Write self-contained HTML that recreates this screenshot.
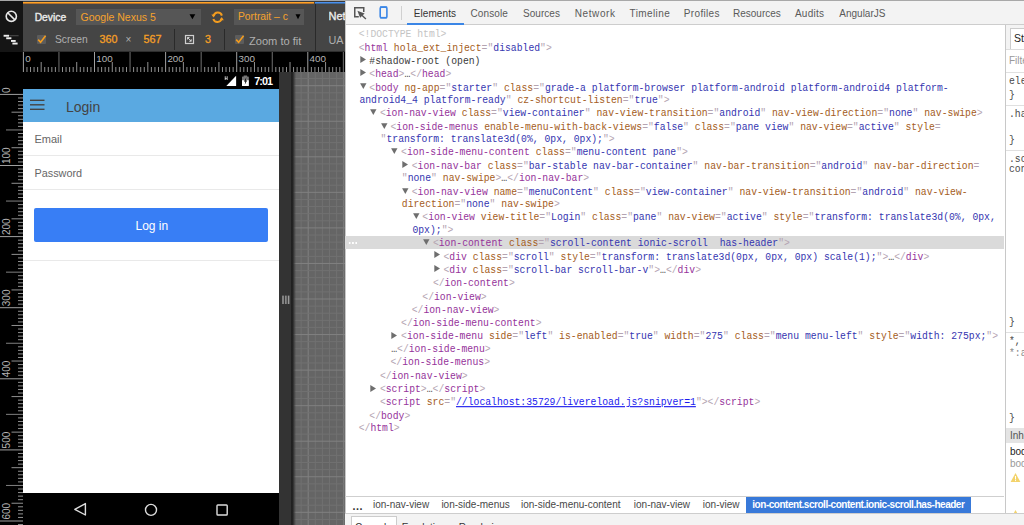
<!DOCTYPE html>
<html><head><meta charset="utf-8"><style>
*{margin:0;padding:0}
body{width:1024px;height:525px;overflow:hidden;position:relative;background:#fff;font-family:"Liberation Sans",sans-serif}
.a{position:absolute}
.row{position:absolute;white-space:pre;transform:scaleY(1.12);transform-origin:0 9.1px;font-family:"Liberation Mono",monospace;font-size:9.75px;line-height:13px;color:#222}
.row i{font-style:normal}
.b{color:#b4a4b2}.t{color:#95329a}.n{color:#a45c22}.v{color:#3535b0}.d{color:#c4c4c4}.p{color:#3a3a3a}.e{color:#444}
.l{color:#1a1aee;text-decoration:underline}
.tri{position:absolute}
.tab{position:absolute;top:7.8px;font-size:10px;line-height:12px;color:#333;white-space:pre}
.tb{position:absolute;white-space:pre;line-height:14px}
.or{color:#f5a22d}
.gr{color:#b0b0b0}
.crumb{position:absolute;top:499.2px;font-size:10px;line-height:12px;color:#484848;white-space:pre}
.sb{position:absolute;white-space:pre;transform:scaleY(1.12);transform-origin:0 9px;font-family:"Liberation Mono",monospace;font-size:9.75px;line-height:12px;color:#4a4a4a}
</style></head><body>
<div class=a style="left:0;top:0;width:345px;height:525px;background:#000"></div>
<div class=a style="left:0;top:0;width:23px;height:52px;background:#151515"></div>
<div class=a style="left:23px;top:0;width:322px;height:52px;background:#454545"></div>
<div class=a style="left:23px;top:51px;width:322px;height:1px;background:#2e2e2e"></div>
<div class=a style="left:0;top:0;width:1024px;height:1px;background:#a8a8a8"></div>
<div class=a style="left:23px;top:1px;width:322px;height:1px;background:#3a3a3a"></div>
<div class=a style="left:23px;top:2px;width:291px;height:1px;background:#ffa326"></div>
<div class=a style="left:23px;top:3px;width:291px;height:1px;background:#b8742c"></div>
<div class=a style="left:315px;top:2px;width:30px;height:1px;background:#4a90f0"></div>
<div class=a style="left:315px;top:3px;width:30px;height:1px;background:#3f6c9e"></div>
<div class=a style="left:314.5px;top:4px;width:1px;height:48px;background:#2a2a2a"></div>
<div class=a style="left:173.8px;top:29px;width:1px;height:21px;background:#2a2a2a"></div>
<div class=a style="left:224.0px;top:29px;width:1px;height:21px;background:#2a2a2a"></div>
<svg class=a style="left:0;top:0" width="23" height="52"><circle cx="11.3" cy="16.3" r="5.1" fill="none" stroke="#e8e8e8" stroke-width="1.6"/><line x1="7.7" y1="12.7" x2="14.9" y2="19.9" stroke="#e8e8e8" stroke-width="1.6"/><rect x="3.6" y="34.8" width="5.4" height="1.9" fill="#eee"/><rect x="9" y="35.3" width="9.6" height="0.9" fill="#555"/><rect x="6.2" y="37.3" width="5.2" height="1.9" fill="#eee"/><rect x="11" y="40" width="4.7" height="1.9" fill="#eee"/><rect x="12.4" y="42.6" width="5.2" height="1.9" fill="#eee"/></svg>
<div class="tb" style="left:34.7px;top:11.1px;font-size:10.3px;color:#ececec;-webkit-text-stroke:0.35px #ececec">Device</div>
<div class=a style="left:76px;top:9px;width:125px;height:16px;background:#565656"></div>
<div class="tb or" style="left:80.5px;top:10px;font-size:10.5px">Google Nexus 5</div>
<svg class=a style="left:189px;top:14px" width="7" height="6"><path d="M0.5 0.2H6.3L3.4 5.2Z" fill="#000"/></svg>
<svg class=a style="left:209px;top:9.4px" width="18" height="16"><path d="M4.6 7A4.3 4.3 0 0 1 12.9 6.6" fill="none" stroke="#f39c1f" stroke-width="2"/><path d="M12.6 9.6A4.3 4.3 0 0 1 4.3 10" fill="none" stroke="#f39c1f" stroke-width="2"/><path d="M2.4 5.4L6.6 5.4L4.5 8.6Z" fill="#f39c1f"/><path d="M14.8 11.2L10.6 11.2L12.7 8Z" fill="#f39c1f"/></svg>
<div class=a style="left:234px;top:9px;width:70px;height:16px;background:#565656"></div>
<div class="tb or" style="left:238px;top:10px;font-size:10.3px">Portrait – c</div>
<svg class=a style="left:295px;top:14px" width="7" height="6"><path d="M0.5 0.2H5.5L3 5.2Z" fill="#000"/></svg>
<div class="tb" style="left:328.5px;top:9px;font-size:11px;color:#ececec;-webkit-text-stroke:0.35px #ececec;width:16.3px;overflow:hidden">Net</div>
<div class=a style="left:37px;top:35.2px;width:9px;height:9px;background:#5c5c5c;border-radius:1px"></div><svg class=a style="left:36px;top:34.2px" width="12" height="11"><path d="M2.2 5.6L4.6 8.2L9.6 1.8" fill="none" stroke="#f39c1f" stroke-width="1.6"/></svg>
<div class="tb gr" style="left:55px;top:32.6px;font-size:10.3px">Screen</div>
<div class="tb or" style="left:99.5px;top:32.4px;font-size:10.8px;-webkit-text-stroke:0.3px #f39c1f">360</div>
<div class="tb gr" style="left:125.5px;top:33px;font-size:10px">×</div>
<div class="tb or" style="left:143.5px;top:32.4px;font-size:10.8px;-webkit-text-stroke:0.3px #f39c1f">567</div>
<svg class=a style="left:184px;top:34px" width="11" height="11"><rect x="1.5" y="1.5" width="8" height="8" fill="none" stroke="#cfcfcf" stroke-width="1.2"/><path d="M3.5 3.5L7.2 7.2M3.5 3.5V5.5M3.5 3.5H5.5M7.2 7.2V5.2M7.2 7.2H5.2" stroke="#cfcfcf" stroke-width="1"/></svg>
<div class="tb or" style="left:205px;top:32.4px;font-size:10.8px;-webkit-text-stroke:0.3px #f39c1f">3</div>
<div class=a style="left:235px;top:35.2px;width:9px;height:9px;background:#5c5c5c;border-radius:1px"></div><svg class=a style="left:234px;top:34.2px" width="12" height="11"><path d="M2.2 5.6L4.6 8.2L9.6 1.8" fill="none" stroke="#f39c1f" stroke-width="1.6"/></svg>
<div class="tb gr" style="left:249px;top:33.7px;font-size:11.1px">Zoom to fit</div>
<div class="tb gr" style="left:328.5px;top:32.5px;font-size:10.8px">UA</div>
<svg class=a style="left:0;top:0" width="345" height="525"><rect x="22.90" y="52" width="1" height="20" fill="#a0a0a0"/><text x="25.20" y="62.1" fill="#b4b4b4" font-size="9.8" font-family="Liberation Sans">0</text><rect x="26.45" y="67" width="1" height="5" fill="#909090"/><rect x="30.01" y="67" width="1" height="5" fill="#909090"/><rect x="33.56" y="67" width="1" height="5" fill="#909090"/><rect x="37.12" y="67" width="1" height="5" fill="#909090"/><rect x="40.67" y="62" width="1" height="10" fill="#909090"/><rect x="44.23" y="67" width="1" height="5" fill="#909090"/><rect x="47.78" y="67" width="1" height="5" fill="#909090"/><rect x="51.34" y="67" width="1" height="5" fill="#909090"/><rect x="54.89" y="67" width="1" height="5" fill="#909090"/><rect x="58.45" y="52" width="1" height="20" fill="#707070"/><rect x="62.00" y="67" width="1" height="5" fill="#909090"/><rect x="65.56" y="67" width="1" height="5" fill="#909090"/><rect x="69.11" y="67" width="1" height="5" fill="#909090"/><rect x="72.67" y="67" width="1" height="5" fill="#909090"/><rect x="76.22" y="62" width="1" height="10" fill="#909090"/><rect x="79.78" y="67" width="1" height="5" fill="#909090"/><rect x="83.33" y="67" width="1" height="5" fill="#909090"/><rect x="86.89" y="67" width="1" height="5" fill="#909090"/><rect x="90.44" y="67" width="1" height="5" fill="#909090"/><rect x="94.00" y="52" width="1" height="20" fill="#a0a0a0"/><text x="96.30" y="62.1" fill="#b4b4b4" font-size="9.8" font-family="Liberation Sans">100</text><rect x="97.56" y="67" width="1" height="5" fill="#909090"/><rect x="101.11" y="67" width="1" height="5" fill="#909090"/><rect x="104.66" y="67" width="1" height="5" fill="#909090"/><rect x="108.22" y="67" width="1" height="5" fill="#909090"/><rect x="111.78" y="62" width="1" height="10" fill="#909090"/><rect x="115.33" y="67" width="1" height="5" fill="#909090"/><rect x="118.88" y="67" width="1" height="5" fill="#909090"/><rect x="122.44" y="67" width="1" height="5" fill="#909090"/><rect x="126.00" y="67" width="1" height="5" fill="#909090"/><rect x="129.55" y="52" width="1" height="20" fill="#707070"/><rect x="133.10" y="67" width="1" height="5" fill="#909090"/><rect x="136.66" y="67" width="1" height="5" fill="#909090"/><rect x="140.22" y="67" width="1" height="5" fill="#909090"/><rect x="143.77" y="67" width="1" height="5" fill="#909090"/><rect x="147.32" y="62" width="1" height="10" fill="#909090"/><rect x="150.88" y="67" width="1" height="5" fill="#909090"/><rect x="154.44" y="67" width="1" height="5" fill="#909090"/><rect x="157.99" y="67" width="1" height="5" fill="#909090"/><rect x="161.54" y="67" width="1" height="5" fill="#909090"/><rect x="165.10" y="52" width="1" height="20" fill="#a0a0a0"/><text x="167.40" y="62.1" fill="#b4b4b4" font-size="9.8" font-family="Liberation Sans">200</text><rect x="168.66" y="67" width="1" height="5" fill="#909090"/><rect x="172.21" y="67" width="1" height="5" fill="#909090"/><rect x="175.76" y="67" width="1" height="5" fill="#909090"/><rect x="179.32" y="67" width="1" height="5" fill="#909090"/><rect x="182.88" y="62" width="1" height="10" fill="#909090"/><rect x="186.43" y="67" width="1" height="5" fill="#909090"/><rect x="189.98" y="67" width="1" height="5" fill="#909090"/><rect x="193.54" y="67" width="1" height="5" fill="#909090"/><rect x="197.09" y="67" width="1" height="5" fill="#909090"/><rect x="200.65" y="52" width="1" height="20" fill="#707070"/><rect x="204.20" y="67" width="1" height="5" fill="#909090"/><rect x="207.76" y="67" width="1" height="5" fill="#909090"/><rect x="211.31" y="67" width="1" height="5" fill="#909090"/><rect x="214.87" y="67" width="1" height="5" fill="#909090"/><rect x="218.42" y="62" width="1" height="10" fill="#909090"/><rect x="221.98" y="67" width="1" height="5" fill="#909090"/><rect x="225.53" y="67" width="1" height="5" fill="#909090"/><rect x="229.09" y="67" width="1" height="5" fill="#909090"/><rect x="232.64" y="67" width="1" height="5" fill="#909090"/><rect x="236.20" y="52" width="1" height="20" fill="#a0a0a0"/><text x="238.50" y="62.1" fill="#b4b4b4" font-size="9.8" font-family="Liberation Sans">300</text><rect x="239.75" y="67" width="1" height="5" fill="#909090"/><rect x="243.31" y="67" width="1" height="5" fill="#909090"/><rect x="246.86" y="67" width="1" height="5" fill="#909090"/><rect x="250.42" y="67" width="1" height="5" fill="#909090"/><rect x="253.97" y="62" width="1" height="10" fill="#909090"/><rect x="257.53" y="67" width="1" height="5" fill="#909090"/><rect x="261.08" y="67" width="1" height="5" fill="#909090"/><rect x="264.64" y="67" width="1" height="5" fill="#909090"/><rect x="268.19" y="67" width="1" height="5" fill="#909090"/><rect x="271.75" y="52" width="1" height="20" fill="#707070"/><rect x="275.31" y="67" width="1" height="5" fill="#909090"/><rect x="278.86" y="67" width="1" height="5" fill="#909090"/><rect x="282.41" y="67" width="1" height="5" fill="#909090"/><rect x="285.97" y="67" width="1" height="5" fill="#909090"/><rect x="289.52" y="62" width="1" height="10" fill="#909090"/><rect x="293.08" y="67" width="1" height="5" fill="#909090"/><rect x="296.63" y="67" width="1" height="5" fill="#909090"/><rect x="300.19" y="67" width="1" height="5" fill="#909090"/><rect x="303.74" y="67" width="1" height="5" fill="#909090"/><rect x="307.30" y="52" width="1" height="20" fill="#a0a0a0"/><text x="309.60" y="62.1" fill="#b4b4b4" font-size="9.8" font-family="Liberation Sans">400</text><rect x="310.85" y="67" width="1" height="5" fill="#909090"/><rect x="314.41" y="67" width="1" height="5" fill="#909090"/><rect x="317.96" y="67" width="1" height="5" fill="#909090"/><rect x="321.52" y="67" width="1" height="5" fill="#909090"/><rect x="325.07" y="62" width="1" height="10" fill="#909090"/><rect x="328.63" y="67" width="1" height="5" fill="#909090"/><rect x="332.18" y="67" width="1" height="5" fill="#909090"/><rect x="335.74" y="67" width="1" height="5" fill="#909090"/><rect x="339.29" y="67" width="1" height="5" fill="#909090"/><rect x="342.85" y="52" width="1" height="20" fill="#707070"/><rect x="0" y="93.90" width="23" height="1" fill="#a0a0a0"/><text transform="translate(9.6 92.90) rotate(-90)" fill="#b4b4b4" font-size="10" font-family="Liberation Sans">0</text><rect x="18" y="97.46" width="5" height="1" fill="#909090"/><rect x="18" y="101.01" width="5" height="1" fill="#909090"/><rect x="18" y="104.56" width="5" height="1" fill="#909090"/><rect x="18" y="108.12" width="5" height="1" fill="#909090"/><rect x="11.5" y="111.68" width="11.5" height="1" fill="#909090"/><rect x="18" y="115.23" width="5" height="1" fill="#909090"/><rect x="18" y="118.78" width="5" height="1" fill="#909090"/><rect x="18" y="122.34" width="5" height="1" fill="#909090"/><rect x="18" y="125.90" width="5" height="1" fill="#909090"/><rect x="6" y="129.45" width="17" height="1" fill="#808080"/><rect x="18" y="133.00" width="5" height="1" fill="#909090"/><rect x="18" y="136.56" width="5" height="1" fill="#909090"/><rect x="18" y="140.12" width="5" height="1" fill="#909090"/><rect x="18" y="143.67" width="5" height="1" fill="#909090"/><rect x="11.5" y="147.22" width="11.5" height="1" fill="#909090"/><rect x="18" y="150.78" width="5" height="1" fill="#909090"/><rect x="18" y="154.34" width="5" height="1" fill="#909090"/><rect x="18" y="157.89" width="5" height="1" fill="#909090"/><rect x="18" y="161.44" width="5" height="1" fill="#909090"/><rect x="0" y="165.00" width="23" height="1" fill="#a0a0a0"/><text transform="translate(9.6 164.00) rotate(-90)" fill="#b4b4b4" font-size="10" font-family="Liberation Sans">100</text><rect x="18" y="168.56" width="5" height="1" fill="#909090"/><rect x="18" y="172.11" width="5" height="1" fill="#909090"/><rect x="18" y="175.67" width="5" height="1" fill="#909090"/><rect x="18" y="179.22" width="5" height="1" fill="#909090"/><rect x="11.5" y="182.78" width="11.5" height="1" fill="#909090"/><rect x="18" y="186.33" width="5" height="1" fill="#909090"/><rect x="18" y="189.88" width="5" height="1" fill="#909090"/><rect x="18" y="193.44" width="5" height="1" fill="#909090"/><rect x="18" y="197.00" width="5" height="1" fill="#909090"/><rect x="6" y="200.55" width="17" height="1" fill="#808080"/><rect x="18" y="204.11" width="5" height="1" fill="#909090"/><rect x="18" y="207.66" width="5" height="1" fill="#909090"/><rect x="18" y="211.22" width="5" height="1" fill="#909090"/><rect x="18" y="214.77" width="5" height="1" fill="#909090"/><rect x="11.5" y="218.32" width="11.5" height="1" fill="#909090"/><rect x="18" y="221.88" width="5" height="1" fill="#909090"/><rect x="18" y="225.44" width="5" height="1" fill="#909090"/><rect x="18" y="228.99" width="5" height="1" fill="#909090"/><rect x="18" y="232.54" width="5" height="1" fill="#909090"/><rect x="0" y="236.10" width="23" height="1" fill="#a0a0a0"/><text transform="translate(9.6 235.10) rotate(-90)" fill="#b4b4b4" font-size="10" font-family="Liberation Sans">200</text><rect x="18" y="239.66" width="5" height="1" fill="#909090"/><rect x="18" y="243.21" width="5" height="1" fill="#909090"/><rect x="18" y="246.76" width="5" height="1" fill="#909090"/><rect x="18" y="250.32" width="5" height="1" fill="#909090"/><rect x="11.5" y="253.88" width="11.5" height="1" fill="#909090"/><rect x="18" y="257.43" width="5" height="1" fill="#909090"/><rect x="18" y="260.99" width="5" height="1" fill="#909090"/><rect x="18" y="264.54" width="5" height="1" fill="#909090"/><rect x="18" y="268.10" width="5" height="1" fill="#909090"/><rect x="6" y="271.65" width="17" height="1" fill="#808080"/><rect x="18" y="275.20" width="5" height="1" fill="#909090"/><rect x="18" y="278.76" width="5" height="1" fill="#909090"/><rect x="18" y="282.31" width="5" height="1" fill="#909090"/><rect x="18" y="285.87" width="5" height="1" fill="#909090"/><rect x="11.5" y="289.42" width="11.5" height="1" fill="#909090"/><rect x="18" y="292.98" width="5" height="1" fill="#909090"/><rect x="18" y="296.53" width="5" height="1" fill="#909090"/><rect x="18" y="300.09" width="5" height="1" fill="#909090"/><rect x="18" y="303.64" width="5" height="1" fill="#909090"/><rect x="0" y="307.20" width="23" height="1" fill="#a0a0a0"/><text transform="translate(9.6 306.20) rotate(-90)" fill="#b4b4b4" font-size="10" font-family="Liberation Sans">300</text><rect x="18" y="310.75" width="5" height="1" fill="#909090"/><rect x="18" y="314.31" width="5" height="1" fill="#909090"/><rect x="18" y="317.87" width="5" height="1" fill="#909090"/><rect x="18" y="321.42" width="5" height="1" fill="#909090"/><rect x="11.5" y="324.98" width="11.5" height="1" fill="#909090"/><rect x="18" y="328.53" width="5" height="1" fill="#909090"/><rect x="18" y="332.09" width="5" height="1" fill="#909090"/><rect x="18" y="335.64" width="5" height="1" fill="#909090"/><rect x="18" y="339.19" width="5" height="1" fill="#909090"/><rect x="6" y="342.75" width="17" height="1" fill="#808080"/><rect x="18" y="346.31" width="5" height="1" fill="#909090"/><rect x="18" y="349.86" width="5" height="1" fill="#909090"/><rect x="18" y="353.41" width="5" height="1" fill="#909090"/><rect x="18" y="356.97" width="5" height="1" fill="#909090"/><rect x="11.5" y="360.52" width="11.5" height="1" fill="#909090"/><rect x="18" y="364.08" width="5" height="1" fill="#909090"/><rect x="18" y="367.63" width="5" height="1" fill="#909090"/><rect x="18" y="371.19" width="5" height="1" fill="#909090"/><rect x="18" y="374.75" width="5" height="1" fill="#909090"/><rect x="0" y="378.30" width="23" height="1" fill="#a0a0a0"/><text transform="translate(9.6 377.30) rotate(-90)" fill="#b4b4b4" font-size="10" font-family="Liberation Sans">400</text><rect x="18" y="381.86" width="5" height="1" fill="#909090"/><rect x="18" y="385.41" width="5" height="1" fill="#909090"/><rect x="18" y="388.97" width="5" height="1" fill="#909090"/><rect x="18" y="392.52" width="5" height="1" fill="#909090"/><rect x="11.5" y="396.08" width="11.5" height="1" fill="#909090"/><rect x="18" y="399.63" width="5" height="1" fill="#909090"/><rect x="18" y="403.18" width="5" height="1" fill="#909090"/><rect x="18" y="406.74" width="5" height="1" fill="#909090"/><rect x="18" y="410.29" width="5" height="1" fill="#909090"/><rect x="6" y="413.85" width="17" height="1" fill="#808080"/><rect x="18" y="417.40" width="5" height="1" fill="#909090"/><rect x="18" y="420.96" width="5" height="1" fill="#909090"/><rect x="18" y="424.51" width="5" height="1" fill="#909090"/><rect x="18" y="428.07" width="5" height="1" fill="#909090"/><rect x="11.5" y="431.62" width="11.5" height="1" fill="#909090"/><rect x="18" y="435.18" width="5" height="1" fill="#909090"/><rect x="18" y="438.74" width="5" height="1" fill="#909090"/><rect x="18" y="442.29" width="5" height="1" fill="#909090"/><rect x="18" y="445.85" width="5" height="1" fill="#909090"/><rect x="0" y="449.40" width="23" height="1" fill="#a0a0a0"/><text transform="translate(9.6 448.40) rotate(-90)" fill="#b4b4b4" font-size="10" font-family="Liberation Sans">500</text><rect x="18" y="452.96" width="5" height="1" fill="#909090"/><rect x="18" y="456.51" width="5" height="1" fill="#909090"/><rect x="18" y="460.06" width="5" height="1" fill="#909090"/><rect x="18" y="463.62" width="5" height="1" fill="#909090"/><rect x="11.5" y="467.17" width="11.5" height="1" fill="#909090"/><rect x="18" y="470.73" width="5" height="1" fill="#909090"/><rect x="18" y="474.28" width="5" height="1" fill="#909090"/><rect x="18" y="477.84" width="5" height="1" fill="#909090"/><rect x="18" y="481.39" width="5" height="1" fill="#909090"/><rect x="6" y="484.95" width="17" height="1" fill="#808080"/><rect x="18" y="488.50" width="5" height="1" fill="#909090"/><rect x="18" y="492.06" width="5" height="1" fill="#909090"/><rect x="18" y="495.62" width="5" height="1" fill="#909090"/><rect x="18" y="499.17" width="5" height="1" fill="#909090"/><rect x="11.5" y="502.73" width="11.5" height="1" fill="#909090"/><rect x="18" y="506.28" width="5" height="1" fill="#909090"/><rect x="18" y="509.84" width="5" height="1" fill="#909090"/><rect x="18" y="513.39" width="5" height="1" fill="#909090"/><rect x="18" y="516.94" width="5" height="1" fill="#909090"/><rect x="0" y="520.50" width="23" height="1" fill="#a0a0a0"/><text transform="translate(9.6 519.50) rotate(-90)" fill="#b4b4b4" font-size="10" font-family="Liberation Sans">600</text><rect x="18" y="524.05" width="5" height="1" fill="#909090"/></svg>
<div class=a style="left:23px;top:72px;width:256px;height:17.3px;background:#000"></div>
<svg class=a style="left:215px;top:72px" width="64" height="17"><path d="M9.4 4.2H10.4V6.3H12V4.2H13V9H12V7.1H10.4V9H9.4Z" fill="#fff" transform="translate(0.5 0) scale(0.75) translate(3 1.6)"/><path d="M11.3 13.9L21.1 3.8V13.9Z" fill="#fff"/><path d="M28.7 3.5H32.1V4.5H33.2Q33.8 4.5 33.8 5.1V13.4Q33.8 14 33.2 14H27.6Q27 14 27 13.4V5.1Q27 4.5 27.6 4.5H28.7Z" fill="#777"/><path d="M27 8.3H33.8V13.4Q33.8 14 33.2 14H27.6Q27 14 27 13.4Z" fill="#fff"/><path d="M31.3 5.6L28.9 9.6H30.4L29.7 12.8L32.1 8.6H30.6L31.4 5.6Z" fill="#000"/></svg>
<div class="tb" style="left:254.2px;top:75.2px;font-size:10.8px;font-weight:bold;color:#fff;line-height:12px;letter-spacing:-0.9px">7:01</div>
<div class=a style="left:23px;top:89.3px;width:256px;height:32.3px;background:#5aa9e1"></div>
<svg class=a style="left:29px;top:98px" width="17" height="13"><rect x="1" y="1.6" width="14.5" height="1.4" fill="#444"/><rect x="1" y="6.1" width="14.5" height="1.4" fill="#444"/><rect x="1" y="10.6" width="14.5" height="1.4" fill="#444"/></svg>
<div class="tb" style="left:66px;top:98.5px;font-size:14px;color:#444;line-height:16px">Login</div>
<div class=a style="left:23px;top:121.6px;width:256px;height:371.4px;background:#fff"></div>
<div class="tb" style="left:34.5px;top:133px;font-size:11px;color:#666;line-height:13px">Email</div>
<div class=a style="left:23px;top:155px;width:256px;height:1px;background:#e9e9e9"></div>
<div class="tb" style="left:34.5px;top:167px;font-size:10.85px;color:#666;line-height:13px">Password</div>
<div class=a style="left:23px;top:189px;width:256px;height:1px;background:#e9e9e9"></div>
<div class=a style="left:34.2px;top:208px;width:233.5px;height:33.5px;background:#387ef5;border-radius:2px"></div>
<div class="tb" style="left:135.5px;top:218.5px;font-size:12px;color:#fff;line-height:14px">Log in</div>
<div class=a style="left:23px;top:260px;width:256px;height:1px;background:#e9e9e9"></div>
<div class=a style="left:23px;top:493px;width:256px;height:32px;background:#000"></div>
<svg class=a style="left:23px;top:493px" width="256" height="32"><path d="M51.8 16.3L62.4 10.6V22Z" fill="none" stroke="#ddd" stroke-width="1.4" stroke-linejoin="round"/><circle cx="128" cy="16.9" r="5.5" fill="none" stroke="#ddd" stroke-width="1.4"/><rect x="194" y="12" width="10.2" height="10" rx="0.8" fill="none" stroke="#ddd" stroke-width="1.4"/></svg>
<div class=a style="left:279px;top:72px;width:14px;height:453px;background:#333"></div>
<div class=a style="left:293px;top:72px;width:52px;height:453px;background:#656565"></div>
<svg class=a style="left:0;top:0" width="345" height="525"><rect x="293.48" y="72" width="1" height="453" fill="#717171"/><rect x="300.59" y="72" width="1" height="453" fill="#717171"/><rect x="307.70" y="72" width="1" height="453" fill="#808080"/><rect x="314.81" y="72" width="1" height="453" fill="#717171"/><rect x="321.92" y="72" width="1" height="453" fill="#717171"/><rect x="329.03" y="72" width="1" height="453" fill="#717171"/><rect x="336.14" y="72" width="1" height="453" fill="#717171"/><rect x="343.25" y="72" width="1" height="453" fill="#808080"/><rect x="292" y="78.09" width="54" height="1" fill="#717171"/><rect x="292" y="85.20" width="54" height="1" fill="#808080"/><rect x="292" y="92.31" width="54" height="1" fill="#717171"/><rect x="292" y="99.42" width="54" height="1" fill="#717171"/><rect x="292" y="106.53" width="54" height="1" fill="#717171"/><rect x="292" y="113.64" width="54" height="1" fill="#717171"/><rect x="292" y="120.75" width="54" height="1" fill="#808080"/><rect x="292" y="127.86" width="54" height="1" fill="#717171"/><rect x="292" y="134.97" width="54" height="1" fill="#717171"/><rect x="292" y="142.08" width="54" height="1" fill="#717171"/><rect x="292" y="149.19" width="54" height="1" fill="#717171"/><rect x="292" y="156.30" width="54" height="1" fill="#808080"/><rect x="292" y="163.41" width="54" height="1" fill="#717171"/><rect x="292" y="170.52" width="54" height="1" fill="#717171"/><rect x="292" y="177.63" width="54" height="1" fill="#717171"/><rect x="292" y="184.74" width="54" height="1" fill="#717171"/><rect x="292" y="191.85" width="54" height="1" fill="#808080"/><rect x="292" y="198.96" width="54" height="1" fill="#717171"/><rect x="292" y="206.07" width="54" height="1" fill="#717171"/><rect x="292" y="213.18" width="54" height="1" fill="#717171"/><rect x="292" y="220.29" width="54" height="1" fill="#717171"/><rect x="292" y="227.40" width="54" height="1" fill="#808080"/><rect x="292" y="234.51" width="54" height="1" fill="#717171"/><rect x="292" y="241.62" width="54" height="1" fill="#717171"/><rect x="292" y="248.73" width="54" height="1" fill="#717171"/><rect x="292" y="255.84" width="54" height="1" fill="#717171"/><rect x="292" y="262.95" width="54" height="1" fill="#808080"/><rect x="292" y="270.06" width="54" height="1" fill="#717171"/><rect x="292" y="277.17" width="54" height="1" fill="#717171"/><rect x="292" y="284.28" width="54" height="1" fill="#717171"/><rect x="292" y="291.39" width="54" height="1" fill="#717171"/><rect x="292" y="298.50" width="54" height="1" fill="#808080"/><rect x="292" y="305.61" width="54" height="1" fill="#717171"/><rect x="292" y="312.72" width="54" height="1" fill="#717171"/><rect x="292" y="319.83" width="54" height="1" fill="#717171"/><rect x="292" y="326.94" width="54" height="1" fill="#717171"/><rect x="292" y="334.05" width="54" height="1" fill="#808080"/><rect x="292" y="341.16" width="54" height="1" fill="#717171"/><rect x="292" y="348.27" width="54" height="1" fill="#717171"/><rect x="292" y="355.38" width="54" height="1" fill="#717171"/><rect x="292" y="362.49" width="54" height="1" fill="#717171"/><rect x="292" y="369.60" width="54" height="1" fill="#808080"/><rect x="292" y="376.71" width="54" height="1" fill="#717171"/><rect x="292" y="383.82" width="54" height="1" fill="#717171"/><rect x="292" y="390.93" width="54" height="1" fill="#717171"/><rect x="292" y="398.04" width="54" height="1" fill="#717171"/><rect x="292" y="405.15" width="54" height="1" fill="#808080"/><rect x="292" y="412.26" width="54" height="1" fill="#717171"/><rect x="292" y="419.37" width="54" height="1" fill="#717171"/><rect x="292" y="426.48" width="54" height="1" fill="#717171"/><rect x="292" y="433.59" width="54" height="1" fill="#717171"/><rect x="292" y="440.70" width="54" height="1" fill="#808080"/><rect x="292" y="447.81" width="54" height="1" fill="#717171"/><rect x="292" y="454.92" width="54" height="1" fill="#717171"/><rect x="292" y="462.03" width="54" height="1" fill="#717171"/><rect x="292" y="469.14" width="54" height="1" fill="#717171"/><rect x="292" y="476.25" width="54" height="1" fill="#808080"/><rect x="292" y="483.36" width="54" height="1" fill="#717171"/><rect x="292" y="490.47" width="54" height="1" fill="#717171"/><rect x="292" y="497.58" width="54" height="1" fill="#717171"/><rect x="292" y="504.69" width="54" height="1" fill="#717171"/><rect x="292" y="511.80" width="54" height="1" fill="#808080"/><rect x="292" y="518.91" width="54" height="1" fill="#717171"/></svg>
<div class=a style="left:291px;top:72px;width:5px;height:453px;background:linear-gradient(90deg,#1f1f1f 0,#232323 35%,rgba(40,40,40,0) 100%)"></div>
<svg class=a style="left:281px;top:295px" width="10" height="10"><rect x="1.1" y="0.6" width="1.8" height="8.4" fill="#8a8a8a"/><rect x="3.9" y="0.6" width="1.8" height="8.4" fill="#8a8a8a"/><rect x="6.8" y="0.6" width="1.6" height="8.4" fill="#9a9a9a"/></svg>
<div class=a style="left:345px;top:1px;width:679px;height:23.5px;background:#f3f3f3"></div>
<div class=a style="left:345px;top:24px;width:679px;height:1px;background:#cdcdcd"></div>
<div class=a style="left:345px;top:1px;width:1px;height:524px;background:#c8c8c8"></div>
<svg class=a style="left:352px;top:5px" width="16" height="16"><path d="M6.8 11.85H2.75V2.85H11.75V7" fill="none" stroke="#555" stroke-width="1.5"/><path d="M5.4 5.8L12.6 8.6L8.1 12.8Z" fill="#555"/><path d="M9.6 10L13.9 13.9" stroke="#555" stroke-width="1.4"/></svg>
<svg class=a style="left:378px;top:5px" width="11" height="15"><rect x="2.2" y="2.1" width="6.7" height="10.6" rx="1.3" fill="none" stroke="#3b86e6" stroke-width="1.6"/><rect x="2" y="1.4" width="7.1" height="1.6" fill="#3b86e6"/><rect x="2" y="11.9" width="7.1" height="1.6" fill="#3b86e6"/></svg>
<div class=a style="left:401px;top:5.5px;width:1px;height:14px;background:#d0d0d0"></div>
<div class=tab style="left:413.7px;color:#333;letter-spacing:0.1px">Elements</div>
<div class=tab style="left:470.4px;color:#5a5a5a;letter-spacing:0.13px">Console</div>
<div class=tab style="left:523.0px;color:#5a5a5a;letter-spacing:0.05px">Sources</div>
<div class=tab style="left:574.8px;color:#5a5a5a;letter-spacing:0.58px">Network</div>
<div class=tab style="left:629.6px;color:#5a5a5a;letter-spacing:0.39px">Timeline</div>
<div class=tab style="left:683.8px;color:#5a5a5a;letter-spacing:0.34px">Profiles</div>
<div class=tab style="left:733.0px;color:#5a5a5a;letter-spacing:0px">Resources</div>
<div class=tab style="left:794.9px;color:#5a5a5a;letter-spacing:0.28px">Audits</div>
<div class=tab style="left:839.3px;color:#5a5a5a;letter-spacing:0px">AngularJS</div>
<div class=a style="left:407px;top:23px;width:57px;height:2px;background:#3b86e6"></div>
<div style="position:absolute;left:345px;top:236px;width:659px;height:12.5px;background:#dadada"></div><div style="position:absolute;left:348px;top:242px;width:10px;height:2px;background-image:radial-gradient(circle,#fff 0.9px,transparent 1.1px);background-size:3.3px 2px"></div>
<div class=row style="left:358.70px;top:28.11px"><i class=d>&lt;!DOCTYPE html&gt;</i></div>
<div class=row style="left:358.70px;top:41.51px"><i class=b>&lt;</i><i class=t>html</i> <i class=n>hola_ext_inject</i><i class=b>="</i><i class=v>disabled</i><i class=b>"</i><i class=b>&gt;</i></div>
<svg class=tri style="left:359.50px;top:56.15px" width="7" height="7"><path d="M0.3 0.1L6 3.5L0.3 6.9Z" fill="#6e6e6e"/></svg>
<div class=row style="left:369.30px;top:54.56px"><i class=p>#shadow-root (open)</i></div>
<svg class=tri style="left:359.50px;top:69.00px" width="7" height="7"><path d="M0.3 0.1L6 3.5L0.3 6.9Z" fill="#6e6e6e"/></svg>
<div class=row style="left:369.30px;top:67.91px"><i class=b>&lt;</i><i class=t>head</i><i class=b>&gt;</i><i class=e>…</i><i class=b>&lt;/</i><i class=t>head</i><i class=b>&gt;</i></div>
<svg class=tri style="left:359.50px;top:83.35px" width="7" height="6"><path d="M0.1 0.2L6.5 0.2L3.3 5.9Z" fill="#6e6e6e"/></svg>
<div class=row style="left:369.30px;top:81.76px"><i class=b>&lt;</i><i class=t>body</i> <i class=n>ng-app</i><i class=b>="</i><i class=v>starter</i><i class=b>"</i> <i class=n>class</i><i class=b>="</i><i class=v>grade-a platform-browser platform-android platform-android4 platform-</i></div>
<div class=row style="left:359.40px;top:94.06px"><i class=v>android4_4 platform-ready</i><i class=b>"</i> <i class=n>cz-shortcut-listen</i><i class=b>="</i><i class=v>true</i><i class=b>"</i><i class=b>&gt;</i></div>
<svg class=tri style="left:370.10px;top:109.15px" width="7" height="6"><path d="M0.1 0.2L6.5 0.2L3.3 5.9Z" fill="#6e6e6e"/></svg>
<div class=row style="left:379.90px;top:107.16px"><i class=b>&lt;</i><i class=t>ion-nav-view</i> <i class=n>class</i><i class=b>="</i><i class=v>view-container</i><i class=b>"</i> <i class=n>nav-view-transition</i><i class=b>="</i><i class=v>android</i><i class=b>"</i> <i class=n>nav-view-direction</i><i class=b>="</i><i class=v>none</i><i class=b>"</i> <i class=n>nav-swipe</i><i class=b>&gt;</i></div>
<svg class=tri style="left:380.70px;top:122.50px" width="7" height="6"><path d="M0.1 0.2L6.5 0.2L3.3 5.9Z" fill="#6e6e6e"/></svg>
<div class=row style="left:390.50px;top:120.51px"><i class=b>&lt;</i><i class=t>ion-side-menus</i> <i class=n>enable-menu-with-back-views</i><i class=b>="</i><i class=v>false</i><i class=b>"</i> <i class=n>class</i><i class=b>="</i><i class=v>pane view</i><i class=b>"</i> <i class=n>nav-view</i><i class=b>="</i><i class=v>active</i><i class=b>"</i> <i class=n>style</i><i class=b>=</i></div>
<div class=row style="left:380.60px;top:132.86px"><i class=b>"</i><i class=v>transform: translate3d(0%, 0px, 0px);</i><i class=b>"&gt;</i></div>
<svg class=tri style="left:391.30px;top:148.40px" width="7" height="6"><path d="M0.1 0.2L6.5 0.2L3.3 5.9Z" fill="#6e6e6e"/></svg>
<div class=row style="left:401.10px;top:146.41px"><i class=b>&lt;</i><i class=t>ion-side-menu-content</i> <i class=n>class</i><i class=b>="</i><i class=v>menu-content pane</i><i class=b>"</i><i class=b>&gt;</i></div>
<svg class=tri style="left:401.90px;top:161.45px" width="7" height="7"><path d="M0.3 0.1L6 3.5L0.3 6.9Z" fill="#6e6e6e"/></svg>
<div class=row style="left:411.70px;top:159.86px"><i class=b>&lt;</i><i class=t>ion-nav-bar</i> <i class=n>class</i><i class=b>="</i><i class=v>bar-stable nav-bar-container</i><i class=b>"</i> <i class=n>nav-bar-transition</i><i class=b>="</i><i class=v>android</i><i class=b>"</i> <i class=n>nav-bar-direction</i><i class=b>=</i></div>
<div class=row style="left:401.80px;top:172.21px"><i class=b>"</i><i class=v>none</i><i class=b>"</i> <i class=n>nav-swipe</i><i class=b>&gt;</i><i class=e>…</i><i class=b>&lt;/</i><i class=t>ion-nav-bar</i><i class=b>&gt;</i></div>
<svg class=tri style="left:401.90px;top:187.55px" width="7" height="6"><path d="M0.1 0.2L6.5 0.2L3.3 5.9Z" fill="#6e6e6e"/></svg>
<div class=row style="left:411.70px;top:185.56px"><i class=b>&lt;</i><i class=t>ion-nav-view</i> <i class=n>name</i><i class=b>="</i><i class=v>menuContent</i><i class=b>"</i> <i class=n>class</i><i class=b>="</i><i class=v>view-container</i><i class=b>"</i> <i class=n>nav-view-transition</i><i class=b>="</i><i class=v>android</i><i class=b>"</i> <i class=n>nav-view-</i></div>
<div class=row style="left:401.80px;top:198.11px"><i class=n>direction</i><i class=b>="</i><i class=v>none</i><i class=b>"</i> <i class=n>nav-swipe</i><i class=b>&gt;</i></div>
<svg class=tri style="left:412.50px;top:213.15px" width="7" height="6"><path d="M0.1 0.2L6.5 0.2L3.3 5.9Z" fill="#6e6e6e"/></svg>
<div class=row style="left:422.30px;top:211.16px"><i class=b>&lt;</i><i class=t>ion-view</i> <i class=n>view-title</i><i class=b>="</i><i class=v>Login</i><i class=b>"</i> <i class=n>class</i><i class=b>="</i><i class=v>pane</i><i class=b>"</i> <i class=n>nav-view</i><i class=b>="</i><i class=v>active</i><i class=b>"</i> <i class=n>style</i><i class=b>="</i><i class=v>transform: translate3d(0%, 0px,</i></div>
<div class=row style="left:412.40px;top:224.21px"><i class=v>0px);</i><i class=b>"&gt;</i></div>
<svg class=tri style="left:423.10px;top:239.25px" width="7" height="6"><path d="M0.1 0.2L6.5 0.2L3.3 5.9Z" fill="#6e6e6e"/></svg>
<div class=row style="left:432.90px;top:237.26px"><i class=b>&lt;</i><i class=t>ion-content</i> <i class=n>class</i><i class=b>="</i><i class=v>scroll-content ionic-scroll  has-header</i><i class=b>"</i><i class=b>&gt;</i></div>
<svg class=tri style="left:433.70px;top:251.31px" width="7" height="7"><path d="M0.3 0.1L6 3.5L0.3 6.9Z" fill="#6e6e6e"/></svg>
<div class=row style="left:443.50px;top:250.92px"><i class=b>&lt;</i><i class=t>div</i> <i class=n>class</i><i class=b>="</i><i class=v>scroll</i><i class=b>"</i> <i class=n>style</i><i class=b>="</i><i class=v>transform: translate3d(0px, 0px, 0px) scale(1);</i><i class=b>"</i><i class=b>&gt;</i><i class=e>…</i><i class=b>&lt;/</i><i class=t>div</i><i class=b>&gt;</i></div>
<svg class=tri style="left:433.70px;top:264.62px" width="7" height="7"><path d="M0.3 0.1L6 3.5L0.3 6.9Z" fill="#6e6e6e"/></svg>
<div class=row style="left:443.50px;top:263.53px"><i class=b>&lt;</i><i class=t>div</i> <i class=n>class</i><i class=b>="</i><i class=v>scroll-bar scroll-bar-v</i><i class=b>"</i><i class=b>&gt;</i><i class=e>…</i><i class=b>&lt;/</i><i class=t>div</i><i class=b>&gt;</i></div>
<div class=row style="left:432.90px;top:276.74px"><i class=b>&lt;/</i><i class=t>ion-content</i><i class=b>&gt;</i></div>
<div class=row style="left:422.30px;top:290.55px"><i class=b>&lt;/</i><i class=t>ion-view</i><i class=b>&gt;</i></div>
<div class=row style="left:411.70px;top:304.26px"><i class=b>&lt;/</i><i class=t>ion-nav-view</i><i class=b>&gt;</i></div>
<div class=row style="left:401.10px;top:317.47px"><i class=b>&lt;/</i><i class=t>ion-side-menu-content</i><i class=b>&gt;</i></div>
<svg class=tri style="left:391.30px;top:331.97px" width="7" height="7"><path d="M0.3 0.1L6 3.5L0.3 6.9Z" fill="#6e6e6e"/></svg>
<div class=row style="left:401.10px;top:330.38px"><i class=b>&lt;</i><i class=t>ion-side-menu</i> <i class=n>side</i><i class=b>="</i><i class=v>left</i><i class=b>"</i> <i class=n>is-enabled</i><i class=b>="</i><i class=v>true</i><i class=b>"</i> <i class=n>width</i><i class=b>="</i><i class=v>275</i><i class=b>"</i> <i class=n>class</i><i class=b>="</i><i class=v>menu menu-left</i><i class=b>"</i> <i class=n>style</i><i class=b>="</i><i class=v>width: 275px;</i><i class=b>"</i><i class=b>&gt;</i></div>
<div class=row style="left:391.20px;top:342.79px"><i class=e>…</i><i class=b>&lt;/</i><i class=t>ion-side-menu</i><i class=b>&gt;</i></div>
<div class=row style="left:390.50px;top:356.00px"><i class=b>&lt;/</i><i class=t>ion-side-menus</i><i class=b>&gt;</i></div>
<div class=row style="left:379.90px;top:369.71px"><i class=b>&lt;/</i><i class=t>ion-nav-view</i><i class=b>&gt;</i></div>
<svg class=tri style="left:370.10px;top:384.81px" width="7" height="7"><path d="M0.3 0.1L6 3.5L0.3 6.9Z" fill="#6e6e6e"/></svg>
<div class=row style="left:379.90px;top:383.22px"><i class=b>&lt;</i><i class=t>script</i><i class=b>&gt;</i><i class=e>…</i><i class=b>&lt;/</i><i class=t>script</i><i class=b>&gt;</i></div>
<div class=row style="left:379.90px;top:395.63px"><i class=b>&lt;</i><i class=t>script</i> <i class=n>src</i><i class=b>="</i><i class=l>//localhost:35729/livereload.js?snipver=1</i><i class=b>"&gt;</i><i class=b>&lt;/</i><i class=t>script</i><i class=b>&gt;</i></div>
<div class=row style="left:369.30px;top:409.64px"><i class=b>&lt;/</i><i class=t>body</i><i class=b>&gt;</i></div>
<div class=row style="left:358.70px;top:422.45px"><i class=b>&lt;/</i><i class=t>html</i><i class=b>&gt;</i></div>
<div class=a style="left:1004.5px;top:25px;width:1.2px;height:488px;background:#c8c8c8"></div>
<div class=a style="left:1006px;top:25px;width:18px;height:23.6px;background:#f3f3f3"></div>
<div class=a style="left:1010px;top:27.6px;width:20px;height:21px;background:#fff;border:1px solid #ccc;border-bottom:none;box-sizing:border-box"></div>
<div class="tb" style="left:1014px;top:30.6px;font-size:10.5px;color:#222">Styles</div>
<div class=a style="left:1006px;top:48.6px;width:18px;height:1px;background:#ddd"></div>
<div class="tb" style="left:1009px;top:54px;font-size:10px;color:#999">Filter</div>
<div class=a style="left:1006px;top:72.2px;width:18px;height:1px;background:#e0e0e0"></div>
<div class=a style="left:1006px;top:104.6px;width:18px;height:1px;background:#e0e0e0"></div>
<div class=a style="left:1006px;top:149.6px;width:18px;height:1px;background:#e0e0e0"></div>
<div class=a style="left:1006px;top:332.2px;width:18px;height:1px;background:#e0e0e0"></div>
<div class=sb style="left:1009px;top:76px">element.style {</div>
<div class=sb style="left:1009px;top:89.5px">}</div>
<div class=sb style="left:1009px;top:108.5px">.has-header {</div>
<div class=sb style="left:1009px;top:135px">}</div>
<div class=sb style="left:1009px;top:153.5px">.scroll-content {</div>
<div class=sb style="left:1009px;top:163.5px">content</div>
<div class=sb style="left:1009px;top:317px">}</div>
<div class=sb style="left:1009px;top:336px">*,</div>
<div class=sb style="left:1009px;top:347.5px;color:#888">*:after</div>
<div class=sb style="left:1009px;top:413.2px">}</div>
<div class=a style="left:1006px;top:427.6px;width:18px;height:15px;background:#e4e4e4"></div>
<div class="tb" style="left:1010px;top:429px;font-size:10px;color:#555;line-height:13px">Inherited</div>
<div class="tb" style="left:1010px;top:446.3px;font-size:10px;color:#222;line-height:12px">body</div>
<div class="tb" style="left:1010px;top:458.2px;font-size:10px;color:#999;line-height:12px">body</div>
<svg class=a style="left:1010px;top:472px" width="11" height="11"><path d="M5.5 1L10.4 9.9H0.6Z" fill="#f3d36b"/><rect x="5" y="4" width="1" height="3.5" fill="#fff"/><rect x="5" y="8.1" width="1" height="1" fill="#fff"/></svg>
<svg class=a style="left:1010px;top:509px" width="11" height="11"><path d="M5.5 1L10.4 9.9H0.6Z" fill="#f3d36b"/></svg>
<div class=a style="left:345px;top:495.6px;width:659px;height:1px;background:#cfcfcf"></div>
<div class="crumb" style="left:352px;top:499.5px;font-size:11px;font-weight:bold;color:#333">…</div>
<div class=crumb style="left:373.0px">ion-nav-view</div>
<div class=crumb style="left:441.4px">ion-side-menus</div>
<div class=crumb style="left:521.0px">ion-side-menu-content</div>
<div class=crumb style="left:633.8px">ion-nav-view</div>
<div class=crumb style="left:702.8px">ion-view</div>
<div class=a style="left:745.8px;top:496.6px;width:225px;height:16px;background:#3879d9"></div>
<div class=crumb style="left:752.3px;color:#fff;font-size:10px;font-weight:bold;letter-spacing:-0.47px">ion-content.scroll-content.ionic-scroll.has-header</div>
<div class=a style="left:345px;top:512.5px;width:679px;height:12.5px;background:#f3f3f3"></div>
<div class=a style="left:345px;top:512.5px;width:679px;height:1px;background:#cdcdcd"></div>
<div class=a style="left:350.6px;top:515.6px;width:46px;height:10px;background:#fff;border:1px solid #ccc;border-bottom:none;box-sizing:border-box"></div>
<div class="tb" style="left:355px;top:522px;font-size:10px;color:#333;line-height:12px">Console</div>
<div class="tb" style="left:401.7px;top:522px;font-size:10px;color:#333;line-height:12px">Emulation</div>
<div class="tb" style="left:458.8px;top:522px;font-size:10px;color:#333;line-height:12px">Rendering</div>
</body></html>
